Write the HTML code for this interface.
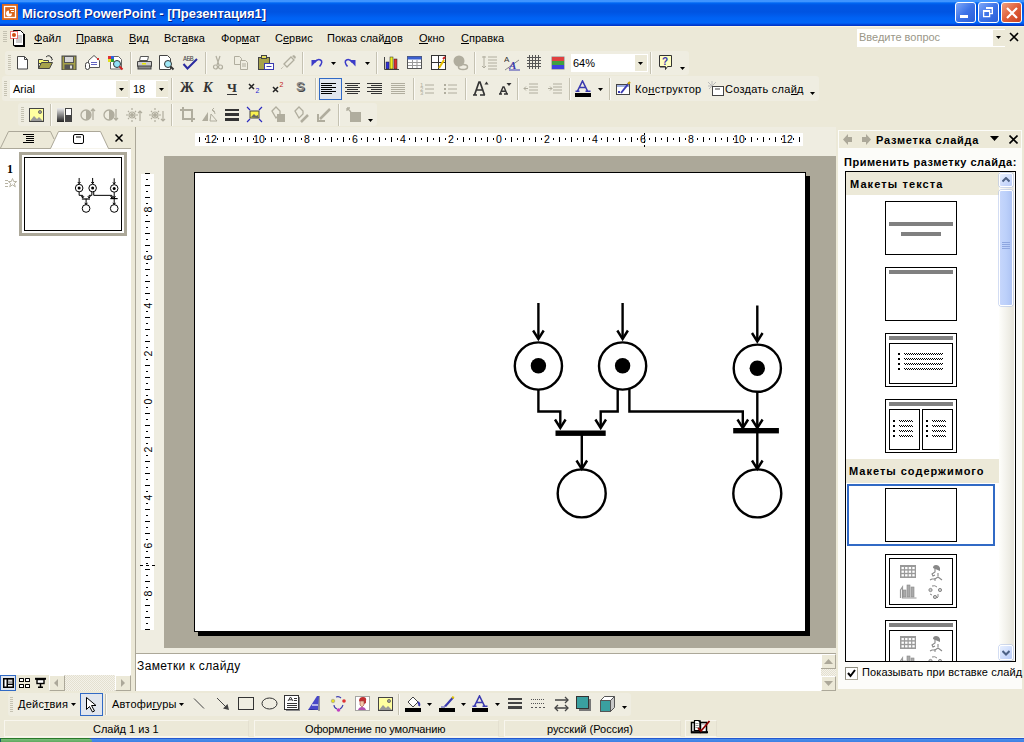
<!DOCTYPE html><html><head><meta charset="utf-8"><style>
*{margin:0;padding:0;box-sizing:border-box}
html,body{width:1024px;height:742px;overflow:hidden;background:#ECE9D8;font-family:"Liberation Sans",sans-serif;font-size:11px;color:#000}
div,svg{position:absolute}
.t{white-space:nowrap;line-height:13px}
u{text-decoration:none;background:linear-gradient(#000,#000) 0 100%/100% 1px no-repeat}
</style></head><body><div style="left:0px;top:0px;width:1024px;height:26px;background:linear-gradient(#3E94FF 0px,#3E94FF 1.5px,#0068F4 3px,#0056E4 5px,#0054E2 12px,#0062F4 18px,#0066F8 23px,#0046DA 24.5px,#0030C0 26px)"></div>
<svg style="left:2px;top:4px" width="17" height="17" viewBox="0 0 17 17"><rect x="0" y="0" width="16" height="16" fill="#D9651E"/><rect x="2.5" y="2.5" width="11" height="11" fill="none" stroke="#fff" stroke-width="1.3"/><path d="M7 6.5A3 3 0 1 0 10 9.5H7z" fill="#fff"/><path d="M8 5.5h4M9 7.5h3" stroke="#fff"/></svg>
<div style="left:955px;top:2px;width:21px;height:21px;background:linear-gradient(135deg,#7FA8F8,#3C73E8 50%,#2A5FD8);border:1px solid #fff;border-radius:3px"></div>
<div style="left:978px;top:2px;width:21px;height:21px;background:linear-gradient(135deg,#7FA8F8,#3C73E8 50%,#2A5FD8);border:1px solid #fff;border-radius:3px"></div>
<div style="left:1001px;top:2px;width:21px;height:21px;background:linear-gradient(135deg,#F0A080,#E0603A 50%,#C84020);border:1px solid #fff;border-radius:3px"></div>
<div style="left:960px;top:15px;width:8px;height:3px;background:#fff"></div>
<svg style="left:978px;top:0px" width="21" height="24" viewBox="0 0 21 24"><rect x="8" y="7" width="7" height="2" fill="#fff"/><rect x="13.6" y="7" width="1.4" height="7" fill="#fff"/><rect x="12" y="13" width="3" height="1.2" fill="#fff"/><rect x="5.6" y="10.6" width="6" height="6" fill="none" stroke="#fff" stroke-width="1.3"/><rect x="5" y="10" width="7" height="2" fill="#fff"/></svg>
<svg style="left:1005px;top:6px" width="14" height="14" viewBox="0 0 14 14"><path d="M2 2l10 10M12 2l-10 10" stroke="#fff" stroke-width="2.2"/></svg>
<div class="t" style="left:22px;top:6px;color:#fff;font-weight:bold;font-size:13px;line-height:15px;text-shadow:1px 1px 0 #0A1E80">Microsoft PowerPoint - [Презентация1]</div>
<div style="left:0px;top:26px;width:1024px;height:24px;background:#ECE9D8"></div>
<div style="left:0px;top:26px;width:1024px;height:1px;background:#FBF6E2"></div>
<div style="left:3px;top:31px;width:4px;height:1px;background:#C5C2B2"></div>
<div style="left:3px;top:33px;width:4px;height:1px;background:#C5C2B2"></div>
<div style="left:3px;top:35px;width:4px;height:1px;background:#C5C2B2"></div>
<div style="left:3px;top:37px;width:4px;height:1px;background:#C5C2B2"></div>
<div style="left:3px;top:39px;width:4px;height:1px;background:#C5C2B2"></div>
<div style="left:3px;top:41px;width:4px;height:1px;background:#C5C2B2"></div>
<svg style="left:9px;top:29px" width="18" height="18" viewBox="0 0 18 18"><path d="M4.5 1.5h7l3 3v12h-10z" fill="#fff" stroke="#000"/><path d="M15 5v12.5H5.5" fill="none" stroke="#000" stroke-width="2"/><path d="M7 7h6M7 9h6M7 11h6M7 13h6" stroke="#999"/><rect x="1.5" y="2.5" width="7" height="7" fill="#fff" stroke="#E00" stroke-dasharray="1 1"/><circle cx="5" cy="6" r="2" fill="#D05010"/></svg>
<div class="t" style="left:34px;top:32px;"><u>Ф</u>айл</div>
<div class="t" style="left:76px;top:32px;"><u>П</u>равка</div>
<div class="t" style="left:129px;top:32px;"><u>В</u>ид</div>
<div class="t" style="left:164px;top:32px;">Вст<u>а</u>вка</div>
<div class="t" style="left:221px;top:32px;">Фор<u>м</u>ат</div>
<div class="t" style="left:275px;top:32px;">С<u>е</u>рвис</div>
<div class="t" style="left:327px;top:32px;">Показ слай<u>д</u>ов</div>
<div class="t" style="left:419px;top:32px;"><u>О</u>кно</div>
<div class="t" style="left:461px;top:32px;"><u>С</u>правка</div>
<div style="left:857px;top:29px;width:148px;height:18px;background:#fff;border:1px solid #fff"></div>
<div class="t" style="left:859px;top:31px;color:#9A9788">Введите вопрос</div>
<div style="left:993px;top:30px;width:12px;height:16px;background:#ECE9D8"></div>
<svg style="left:996px;top:36px" width="6" height="4"><path d="M0 0h5l-2.5 3z" fill="#000"/></svg>
<svg style="left:1009px;top:32px" width="10" height="10" viewBox="0 0 10 10"><path d="M1 1l8 8M9 1l-8 8" stroke="#000" stroke-width="1.6"/></svg>
<div style="left:5px;top:51px;width:684px;height:24px;background:#EFEDE1;border-radius:3px"></div>
<div style="left:2px;top:76px;width:817px;height:25px;background:#EFEDE1;border-radius:3px"></div>
<div style="left:18px;top:103px;width:359px;height:23px;background:#EFEDE1;border-radius:3px"></div>
<div style="left:0px;top:127px;width:131px;height:548px;background:#fff"></div>
<div style="left:0px;top:127px;width:131px;height:22px;background:#ECE9D8"></div>
<div style="left:136px;top:127px;width:700px;height:527px;background:#EFEDE1"></div>
<div style="left:135px;top:127px;width:1px;height:527px;background:#ACA899"></div>
<div style="left:164px;top:156px;width:672px;height:492px;background:#ACA899"></div>
<div style="left:198px;top:176px;width:612px;height:460px;background:#000"></div>
<div style="left:194px;top:172px;width:612px;height:460px;background:#fff;border:1px solid #000"></div>
<div style="left:135px;top:653px;width:701px;height:38px;background:#fff;border-top:1px solid #ACA899;border-left:1px solid #ACA899"></div>
<div style="left:838px;top:130px;width:184px;height:559px;background:#FCFCF9"></div>
<div style="left:839px;top:131px;width:182px;height:17px;background:#ECE9D8"></div>
<div style="left:8px;top:693px;width:623px;height:23px;background:#EFEDE1;border-radius:3px"></div>
<div style="left:4px;top:720px;width:245px;height:17px;border:1px solid #F8F6EE;border-right-color:#E4E0D0;border-bottom-color:#F8F6EE"></div>
<div style="left:254px;top:720px;width:245px;height:17px;border:1px solid #F8F6EE;border-right-color:#E4E0D0;border-bottom-color:#F8F6EE"></div>
<div style="left:504px;top:720px;width:177px;height:17px;border:1px solid #F8F6EE;border-right-color:#E4E0D0;border-bottom-color:#F8F6EE"></div>
<div style="left:685px;top:720px;width:32px;height:17px;border:1px solid #F8F6EE;border-right-color:#E4E0D0;border-bottom-color:#F8F6EE"></div>
<div style="left:0px;top:737px;width:1024px;height:1px;background:#F6F3E6"></div>
<div style="left:0px;top:738px;width:1024px;height:4px;background:linear-gradient(#2458D0 0,#2458D0 1px,#4A8EEA 1px,#3C80E4 4px)"></div>
<div style="left:0px;top:738px;width:92px;height:4px;background:linear-gradient(#2A7A2A 0,#2A7A2A 1px,#7CBE7C 1px,#5EA85E 4px);border-top-right-radius:5px"></div>
<div style="left:0px;top:738px;width:1px;height:4px;background:#1C5F5F"></div>
<div style="left:8px;top:55px;width:3px;height:1px;background:#C5C2B2"></div>
<div style="left:8px;top:57px;width:3px;height:1px;background:#C5C2B2"></div>
<div style="left:8px;top:59px;width:3px;height:1px;background:#C5C2B2"></div>
<div style="left:8px;top:61px;width:3px;height:1px;background:#C5C2B2"></div>
<div style="left:8px;top:63px;width:3px;height:1px;background:#C5C2B2"></div>
<div style="left:8px;top:65px;width:3px;height:1px;background:#C5C2B2"></div>
<div style="left:8px;top:67px;width:3px;height:1px;background:#C5C2B2"></div>
<div style="left:8px;top:69px;width:3px;height:1px;background:#C5C2B2"></div>
<svg style="left:14px;top:54px" width="16" height="16" viewBox="0 0 16 16"><path d="M3.5 2.5h7l3 3v9.5h-10z" fill="#fff" stroke="#444"/><path d="M10.5 2.5v3h3" fill="none" stroke="#444"/></svg>
<svg style="left:37px;top:54px" width="17" height="16" viewBox="0 0 17 16"><path d="M1.5 5.5h4l1 1h5v3h-10z" fill="#F8F870" stroke="#444"/><path d="M1.5 14.5l3-6h11l-3 6z" fill="#A6A24A" stroke="#444"/><path d="M1.5 5.5v9" stroke="#444"/><path d="M9 3q3-3 6 1" fill="none" stroke="#333"/><path d="M13.5 3.5l2 1.5-1 1.5" fill="none" stroke="#333"/></svg>
<svg style="left:61px;top:54px" width="16" height="16" viewBox="0 0 16 16"><rect x="1" y="2" width="14" height="14" fill="#A6A24A" stroke="#444"/><rect x="3.5" y="2.5" width="9" height="6" fill="#D8D8D8" stroke="#555"/><rect x="3.5" y="10.5" width="9" height="5" fill="#555"/><rect x="9" y="11.5" width="2" height="3" fill="#ddd"/></svg>
<svg style="left:84px;top:54px" width="17" height="17" viewBox="0 0 17 17"><path d="M4.5 6.5l5.5-5 5.5 5v7h-11z" fill="#fff" stroke="#555"/><path d="M7 8.5h6M7 10.5h6" stroke="#3A3AB0" stroke-width=".8"/><rect x="13" y="4" width="2" height="2" fill="#D03030"/><rect x="1.5" y="8.5" width="4" height="7" rx="2" fill="#fff" stroke="#444"/></svg>
<svg style="left:107px;top:54px" width="17" height="17" viewBox="0 0 17 17"><path d="M3.5 2.5h8l3 3v9.5h-11z" fill="#fff" stroke="#666"/><rect x="1" y="2" width="3" height="3" fill="#E03030"/><rect x="4" y="2" width="3" height="3" fill="#3060E0"/><rect x="1" y="5" width="3" height="3" fill="#E0E020"/><rect x="4" y="5" width="3" height="3" fill="#30A030"/><circle cx="10" cy="10" r="3.5" fill="#8FE0F8" stroke="#333"/><path d="M12.5 12.5l3 3" stroke="#D02020" stroke-width="2"/></svg>
<div style="left:130px;top:52px;width:1px;height:22px;background:#C5C2B2"></div>
<div style="left:131px;top:52px;width:1px;height:22px;background:#FBFAF5"></div>
<svg style="left:136px;top:54px" width="17" height="17" viewBox="0 0 17 17"><path d="M4.5 2.5h8l-1 4h-8z" fill="#fff" stroke="#555"/><path d="M1.5 7.5h14v5h-14z" fill="#ccc" stroke="#444"/><rect x="2" y="12" width="13" height="3" fill="#888" stroke="#444"/><rect x="6" y="9" width="4" height="1.5" fill="#E8E800"/></svg>
<svg style="left:158px;top:54px" width="17" height="17" viewBox="0 0 17 17"><path d="M1.5 1.5h8l3 3v11h-11z" fill="#fff" stroke="#444"/><circle cx="10" cy="10" r="3.5" fill="#A0E8F8" stroke="#333"/><path d="M12.5 12.5l3 3" stroke="#333" stroke-width="2"/></svg>
<svg style="left:182px;top:54px" width="17" height="17" viewBox="0 0 17 17"><text x="1" y="6.5" font-family="Liberation Mono" font-size="6.5" fill="#444" letter-spacing="-.5">АБВ</text><path d="M1.5 10l4 4.5 9.5-9.5" fill="none" stroke="#2B2BA0" stroke-width="2"/></svg>
<div style="left:205px;top:52px;width:1px;height:22px;background:#C5C2B2"></div>
<div style="left:206px;top:52px;width:1px;height:22px;background:#FBFAF5"></div>
<svg style="left:210px;top:54px" width="16" height="16" viewBox="0 0 16 16"><path d="M6 2l3 9M10 2l-3 9" stroke="#B0AD9E" stroke-width="1.2"/><circle cx="5.5" cy="13" r="2" fill="none" stroke="#B0AD9E" stroke-width="1.2"/><circle cx="10.5" cy="13" r="2" fill="none" stroke="#B0AD9E" stroke-width="1.2"/></svg>
<svg style="left:233px;top:54px" width="17" height="16" viewBox="0 0 17 16"><path d="M1.5 2.5h5l2 2v6h-7z" fill="none" stroke="#B0AD9E"/><path d="M7.5 6.5h5l2 2v7h-7z" fill="#EFEDE1" stroke="#B0AD9E"/><path d="M9 10h4M9 12h4" stroke="#B0AD9E"/></svg>
<svg style="left:257px;top:54px" width="17" height="17" viewBox="0 0 17 17"><rect x="1.5" y="3.5" width="11" height="12" fill="#A6A24A" stroke="#444"/><rect x="4.5" y="1.5" width="5" height="3" fill="#E8E060" stroke="#444"/><rect x="7.5" y="9.5" width="9" height="6" fill="#fff" stroke="#3A3AB0"/><path d="M9.5 12.5h5" stroke="#3A3AB0"/></svg>
<svg style="left:280px;top:54px" width="17" height="16" viewBox="0 0 17 16"><path d="M4 10l7-7 3 3-7 7z" fill="none" stroke="#B0AD9E" stroke-width="1.3"/><path d="M12 2l2-1 2 2-1 2" fill="#B0AD9E"/><path d="M1 15l3-3" stroke="#B0AD9E" stroke-dasharray="1 1"/></svg>
<div style="left:302px;top:52px;width:1px;height:22px;background:#C5C2B2"></div>
<div style="left:303px;top:52px;width:1px;height:22px;background:#FBFAF5"></div>
<svg style="left:310px;top:54px" width="14" height="16" viewBox="0 0 14 16"><path d="M4.5 8.5q3-4 6-2.5t-1 6.5" fill="none" stroke="#3C3CC8" stroke-width="1.5"/><path d="M1.5 12.5v-6.5h6z" fill="#3C3CC8"/></svg>
<svg style="left:331px;top:62px" width="6" height="4" viewBox="0 0 6 4"><path d="M0 0h5l-2.5 3z" fill="#000"/></svg>
<svg style="left:343px;top:54px" width="14" height="16" viewBox="0 0 14 16"><path d="M9.5 8.5q-3-4-6-2.5t1 6.5" fill="none" stroke="#3C3CC8" stroke-width="1.5"/><path d="M12.5 12.5v-6.5h-6z" fill="#3C3CC8"/></svg>
<svg style="left:365px;top:62px" width="6" height="4" viewBox="0 0 6 4"><path d="M0 0h5l-2.5 3z" fill="#000"/></svg>
<div style="left:376px;top:52px;width:1px;height:22px;background:#C5C2B2"></div>
<div style="left:377px;top:52px;width:1px;height:22px;background:#FBFAF5"></div>
<svg style="left:383px;top:54px" width="17" height="17" viewBox="0 0 17 17"><path d="M1.5 3v12.5H16" fill="none" stroke="#444"/><rect x="3" y="8" width="3" height="7" fill="#3030E0" stroke="#222" stroke-width=".5"/><rect x="7" y="3" width="3" height="12" fill="#F0F020" stroke="#222" stroke-width=".5"/><rect x="11" y="5" width="3" height="10" fill="#E03030" stroke="#222" stroke-width=".5"/></svg>
<svg style="left:406px;top:54px" width="17" height="17" viewBox="0 0 17 17"><rect x="1.5" y="2.5" width="14" height="12" fill="#fff" stroke="#555"/><rect x="1.5" y="2.5" width="14" height="3" fill="#3C60D0"/><path d="M2 8.5h13M2 11.5h13M6.5 6v8M11 6v8" stroke="#999"/></svg>
<svg style="left:430px;top:54px" width="17" height="17" viewBox="0 0 17 17"><rect x="1.5" y="1.5" width="14" height="14" fill="#fff" stroke="#333"/><path d="M1.5 8.5h14M8.5 1.5v14" stroke="#333"/><path d="M9 14l5-8" stroke="#E8C000" stroke-width="2"/><path d="M13 5l2-2" stroke="#D02020" stroke-width="2"/></svg>
<svg style="left:452px;top:54px" width="17" height="17" viewBox="0 0 17 17"><circle cx="7" cy="7" r="5.5" fill="#B0AD9E"/><ellipse cx="11" cy="13" rx="4.5" ry="2.5" fill="none" stroke="#B0AD9E" stroke-width="1.5"/></svg>
<div style="left:474px;top:52px;width:1px;height:22px;background:#C5C2B2"></div>
<div style="left:475px;top:52px;width:1px;height:22px;background:#FBFAF5"></div>
<svg style="left:481px;top:54px" width="17" height="16" viewBox="0 0 17 16"><path d="M3 2v12M1 12l2 2 2-2M1 3h4M7 3h9M7 6h9M7 9h9M7 12h9M7 15h9" fill="none" stroke="#B0AD9E"/></svg>
<svg style="left:504px;top:54px" width="17" height="17" viewBox="0 0 17 17"><text x="0" y="8" font-family="Liberation Sans" font-size="8" fill="#333">A</text><path d="M1 16l14-10" stroke="#888"/><text x="5" y="15" font-family="Liberation Serif" font-style="italic" font-weight="bold" font-size="11" fill="#3A3AB0">A</text><path d="M5 16h11" stroke="#3A3AB0"/></svg>
<svg style="left:526px;top:54px" width="16" height="16" viewBox="0 0 16 16"><path d="M1 3.5h14M1 6.5h14M1 9.5h14M1 12.5h14M3.5 1v14M6.5 1v14M9.5 1v14M12.5 1v14" stroke="#555"/></svg>
<svg style="left:550px;top:54px" width="16" height="17" viewBox="0 0 16 17"><rect x="1.5" y="2.5" width="13" height="13" fill="#888"/><rect x="2" y="3" width="12" height="4" fill="#E04040"/><rect x="2" y="7" width="12" height="4" fill="#40A040"/><rect x="2" y="11" width="12" height="4" fill="#4040E0"/></svg>
<div style="left:571px;top:54px;width:77px;height:18px;background:#fff;border:1px solid #fff"></div>
<div class="t" style="left:573px;top:57px;font-size:11px">64%</div>
<div style="left:635px;top:55px;width:12px;height:16px;background:#ECE9D8"></div>
<svg style="left:638px;top:62px" width="6" height="4" viewBox="0 0 6 4"><path d="M0 0h5l-2.5 3z" fill="#000"/></svg>
<div style="left:650px;top:52px;width:1px;height:22px;background:#C5C2B2"></div>
<div style="left:651px;top:52px;width:1px;height:22px;background:#FBFAF5"></div>
<svg style="left:658px;top:54px" width="17" height="17" viewBox="0 0 17 17"><path d="M1.5 1.5h12v11h-4l-2 3v-3h-6z" fill="#FFFFC0" stroke="#333"/><path d="M2 13h5" stroke="#333" stroke-width="1"/><text x="4" y="11" font-family="Liberation Sans" font-weight="bold" font-size="10" fill="#3A3AB0">?</text></svg>
<svg style="left:680px;top:67px" width="6" height="4" viewBox="0 0 6 4"><path d="M0 0h5l-2.5 3z" fill="#000"/></svg>
<div style="left:4px;top:81px;width:3px;height:1px;background:#C5C2B2"></div>
<div style="left:4px;top:83px;width:3px;height:1px;background:#C5C2B2"></div>
<div style="left:4px;top:85px;width:3px;height:1px;background:#C5C2B2"></div>
<div style="left:4px;top:87px;width:3px;height:1px;background:#C5C2B2"></div>
<div style="left:4px;top:89px;width:3px;height:1px;background:#C5C2B2"></div>
<div style="left:4px;top:91px;width:3px;height:1px;background:#C5C2B2"></div>
<div style="left:4px;top:93px;width:3px;height:1px;background:#C5C2B2"></div>
<div style="left:4px;top:95px;width:3px;height:1px;background:#C5C2B2"></div>
<div style="left:10px;top:80px;width:118px;height:18px;background:#fff;border:1px solid #fff"></div>
<div class="t" style="left:13px;top:83px;">Arial</div>
<div style="left:116px;top:81px;width:12px;height:16px;background:#ECE9D8"></div>
<svg style="left:119px;top:88px" width="6" height="4" viewBox="0 0 6 4"><path d="M0 0h5l-2.5 3z" fill="#000"/></svg>
<div style="left:130px;top:80px;width:38px;height:18px;background:#fff;border:1px solid #fff"></div>
<div class="t" style="left:133px;top:83px;">18</div>
<div style="left:156px;top:81px;width:12px;height:16px;background:#ECE9D8"></div>
<svg style="left:159px;top:88px" width="6" height="4" viewBox="0 0 6 4"><path d="M0 0h5l-2.5 3z" fill="#000"/></svg>
<div style="left:171px;top:78px;width:1px;height:22px;background:#C5C2B2"></div>
<div style="left:172px;top:78px;width:1px;height:22px;background:#FBFAF5"></div>
<div class="t" style="left:180px;top:81px;font-family:&quot;Liberation Serif&quot;;font-weight:bold;font-size:14px;color:#333">Ж</div>
<div class="t" style="left:203px;top:81px;font-family:&quot;Liberation Serif&quot;;font-weight:bold;font-style:italic;font-size:14px;color:#333;letter-spacing:0">К</div>
<div class="t" style="left:227px;top:81px;font-family:&quot;Liberation Serif&quot;;font-weight:bold;font-size:13.5px;color:#333">Ч</div>
<div style="left:227px;top:94px;width:10px;height:1px;background:#333"></div>
<svg style="left:248px;top:80px" width="14" height="16" viewBox="0 0 14 16"><path d="M1 4l5 5M6 4l-5 5" stroke="#222" stroke-width="1.5"/><text x="7.5" y="13" font-family="Liberation Sans" font-size="7" fill="#2020D0">2</text></svg>
<svg style="left:272px;top:80px" width="14" height="16" viewBox="0 0 14 16"><path d="M1 7l5 5M6 7l-5 5" stroke="#222" stroke-width="1.5"/><text x="7.5" y="7" font-family="Liberation Sans" font-size="7" fill="#C02020">2</text></svg>
<div class="t" style="left:296px;top:80px;font-weight:bold;font-size:13px;color:#888;text-shadow:1px 1px 0 #444">S</div>
<div style="left:315px;top:78px;width:1px;height:22px;background:#C5C2B2"></div>
<div style="left:316px;top:78px;width:1px;height:22px;background:#FBFAF5"></div>
<div style="left:319px;top:78px;width:23px;height:22px;background:#E1E6EE;border:1px solid #316AC5"></div>
<svg style="left:321px;top:83px" width="16" height="12" viewBox="0 0 16 12"><rect x="0" y="0" width="15" height="1" fill="#000"/><rect x="0" y="2" width="11" height="1" fill="#000"/><rect x="0" y="4" width="15" height="1" fill="#000"/><rect x="0" y="6" width="11" height="1" fill="#000"/><rect x="0" y="8" width="15" height="1" fill="#000"/><rect x="0" y="10" width="11" height="1" fill="#000"/></svg>
<svg style="left:345px;top:83px" width="16" height="12" viewBox="0 0 16 12"><rect x="0" y="0" width="15" height="1" fill="#333"/><rect x="2" y="2" width="11" height="1" fill="#333"/><rect x="0" y="4" width="15" height="1" fill="#333"/><rect x="2" y="6" width="11" height="1" fill="#333"/><rect x="0" y="8" width="15" height="1" fill="#333"/><rect x="2" y="10" width="11" height="1" fill="#333"/></svg>
<svg style="left:367px;top:83px" width="16" height="12" viewBox="0 0 16 12"><rect x="0" y="0" width="15" height="1" fill="#333"/><rect x="4" y="2" width="11" height="1" fill="#333"/><rect x="0" y="4" width="15" height="1" fill="#333"/><rect x="4" y="6" width="11" height="1" fill="#333"/><rect x="0" y="8" width="15" height="1" fill="#333"/><rect x="4" y="10" width="11" height="1" fill="#333"/></svg>
<svg style="left:391px;top:83px" width="16" height="12" viewBox="0 0 16 12"><rect x="0" y="0" width="14" height="1" fill="#B0AD9E"/><rect x="0" y="2" width="14" height="1" fill="#B0AD9E"/><rect x="0" y="4" width="14" height="1" fill="#B0AD9E"/><rect x="0" y="6" width="14" height="1" fill="#B0AD9E"/><rect x="0" y="8" width="14" height="1" fill="#B0AD9E"/><rect x="0" y="10" width="14" height="1" fill="#B0AD9E"/></svg>
<div style="left:413px;top:78px;width:1px;height:22px;background:#C5C2B2"></div>
<div style="left:414px;top:78px;width:1px;height:22px;background:#FBFAF5"></div>
<svg style="left:420px;top:80px" width="16" height="16" viewBox="0 0 16 16"><text x="0" y="7" font-family="Liberation Sans" font-size="6" fill="#B0AD9E">1</text><text x="0" y="11" font-family="Liberation Sans" font-size="6" fill="#B0AD9E">2</text><text x="0" y="15" font-family="Liberation Sans" font-size="6" fill="#B0AD9E">3</text><path d="M5 5h9M5 9h9M5 13h9" stroke="#B0AD9E"/></svg>
<svg style="left:443px;top:80px" width="16" height="16" viewBox="0 0 16 16"><rect x="1" y="4" width="2" height="2" fill="#B0AD9E"/><rect x="1" y="8" width="2" height="2" fill="#B0AD9E"/><rect x="1" y="12" width="2" height="2" fill="#B0AD9E"/><path d="M5 5h9M5 9h9M5 13h9" stroke="#B0AD9E"/></svg>
<div style="left:465px;top:78px;width:1px;height:22px;background:#C5C2B2"></div>
<div style="left:466px;top:78px;width:1px;height:22px;background:#FBFAF5"></div>
<svg style="left:472px;top:80px" width="17" height="17" viewBox="0 0 17 17"><path d="M1 15h4M8 15h5M2.5 15L7 2h1l4.5 13M4.2 10h6" fill="none" stroke="#333" stroke-width="1.7"/><path d="M12.5 4.5l2-3 2 3z" fill="#333"/></svg>
<svg style="left:498px;top:80px" width="14" height="16" viewBox="0 0 14 16"><path d="M1 14h3M6 14h4M2 14l3-7h1l3 7M3.3 11.3h4" fill="none" stroke="#333" stroke-width="1.4"/><path d="M8.5 3h5l-2.5 3z" fill="#333"/></svg>
<div style="left:517px;top:78px;width:1px;height:22px;background:#C5C2B2"></div>
<div style="left:518px;top:78px;width:1px;height:22px;background:#FBFAF5"></div>
<svg style="left:523px;top:80px" width="17" height="16" viewBox="0 0 17 16"><path d="M6 4h9M6 7h9M6 10h9M6 13h9M1 8.5h4M1 8.5l2-2M1 8.5l2 2" fill="none" stroke="#B0AD9E"/></svg>
<svg style="left:547px;top:80px" width="17" height="16" viewBox="0 0 17 16"><path d="M6 4h9M6 7h9M6 10h9M6 13h9M1 8.5h4M5 8.5l-2-2M5 8.5l-2 2" fill="none" stroke="#B0AD9E"/></svg>
<div style="left:569px;top:78px;width:1px;height:22px;background:#C5C2B2"></div>
<div style="left:570px;top:78px;width:1px;height:22px;background:#FBFAF5"></div>
<svg style="left:575px;top:80px" width="17" height="17" viewBox="0 0 17 17"><path d="M2.5 11L7.5 1L12.5 11M4.5 7.5h6M0.5 11.2h4M10.5 11.2h5" fill="none" stroke="#3A3AB0" stroke-width="1.6"/><rect x="0" y="13" width="16" height="4" fill="#000"/></svg>
<svg style="left:598px;top:88px" width="6" height="4" viewBox="0 0 6 4"><path d="M0 0h5l-2.5 3z" fill="#000"/></svg>
<div style="left:609px;top:78px;width:1px;height:22px;background:#C5C2B2"></div>
<div style="left:610px;top:78px;width:1px;height:22px;background:#FBFAF5"></div>
<svg style="left:615px;top:80px" width="17" height="17" viewBox="0 0 17 17"><rect x="1.5" y="4.5" width="13" height="10" fill="#fff" stroke="#444"/><rect x="2" y="5" width="12" height="2" fill="#A0B0E0"/><path d="M6 13l8-10" stroke="#3A3AB0" stroke-width="2"/><path d="M13 4l2-2" stroke="#C8A000" stroke-width="2"/><rect x="3" y="11" width="2" height="2" fill="#3A3AB0"/></svg>
<div class="t" style="left:635px;top:83px;letter-spacing:0.35px">Ко<u>н</u>структор</div>
<svg style="left:707px;top:80px" width="17" height="17" viewBox="0 0 17 17"><path d="M1 2l4 4M5 1v4M1 6h4M2 9l3-3M9 2l-4 4" stroke="#bbb"/><rect x="5.5" y="6.5" width="11" height="9" fill="#fff" stroke="#444"/><path d="M8 9h5" stroke="#444"/></svg>
<div class="t" style="left:725px;top:83px;letter-spacing:0.25px">Создать сла<u>й</u>д</div>
<svg style="left:810px;top:92px" width="6" height="4" viewBox="0 0 6 4"><path d="M0 0h5l-2.5 3z" fill="#000"/></svg>
<div style="left:21px;top:107px;width:3px;height:1px;background:#C5C2B2"></div>
<div style="left:21px;top:109px;width:3px;height:1px;background:#C5C2B2"></div>
<div style="left:21px;top:111px;width:3px;height:1px;background:#C5C2B2"></div>
<div style="left:21px;top:113px;width:3px;height:1px;background:#C5C2B2"></div>
<div style="left:21px;top:115px;width:3px;height:1px;background:#C5C2B2"></div>
<div style="left:21px;top:117px;width:3px;height:1px;background:#C5C2B2"></div>
<div style="left:21px;top:119px;width:3px;height:1px;background:#C5C2B2"></div>
<div style="left:21px;top:121px;width:3px;height:1px;background:#C5C2B2"></div>
<svg style="left:28px;top:106px" width="17" height="17" viewBox="0 0 17 17"><rect x="1" y="2" width="15" height="14" fill="#444"/><rect x="2" y="3" width="13" height="12" fill="#FFFFA0"/><path d="M2 15l4-5 3 3 2-2 4 4z" fill="#999"/><circle cx="12" cy="6" r="1.6" fill="#999" stroke="#444" stroke-width=".6"/></svg>
<div style="left:50px;top:104px;width:1px;height:22px;background:#C5C2B2"></div>
<div style="left:51px;top:104px;width:1px;height:22px;background:#FBFAF5"></div>
<svg style="left:57px;top:106px" width="16" height="17" viewBox="0 0 16 17"><defs><linearGradient id="gg" x1="0" y1="0" x2="0" y2="1"><stop offset="0" stop-color="#eee"/><stop offset="1" stop-color="#222"/></linearGradient></defs><rect x="0" y="2" width="7" height="14" fill="url(#gg)"/><rect x="8.5" y="2.5" width="6" height="13" fill="#fff" stroke="#444"/><rect x="8" y="9" width="7" height="7" fill="#444"/></svg>
<svg style="left:80px;top:106px" width="17" height="17" viewBox="0 0 17 17"><g fill="none" stroke="#B0AD9E" stroke-width="1.3"><circle cx="6" cy="9" r="5"/><path d="M13 3v11M11 5l2-2 2 2"/></g><path d="M6 4a5 5 0 0 1 0 10z" fill="#B0AD9E"/></svg>
<svg style="left:103px;top:106px" width="17" height="17" viewBox="0 0 17 17"><g fill="none" stroke="#B0AD9E" stroke-width="1.3"><circle cx="6" cy="9" r="5"/><path d="M13 3v11M11 12l2 2 2-2"/></g><path d="M6 4a5 5 0 0 1 0 10z" fill="#B0AD9E"/></svg>
<svg style="left:126px;top:106px" width="17" height="17" viewBox="0 0 17 17"><g fill="none" stroke="#B0AD9E" stroke-width="1.2"><circle cx="6" cy="9" r="3"/><path d="M6 2v2M6 14v2M0 9h2M10 9h2M2 5l1 1M10 5l-1 1M2 13l1-1M10 13l-1-1"/><path d="M14 5v10M12 7l2-2 2 2"/></g><circle cx="6" cy="9" r="2" fill="#B0AD9E"/></svg>
<svg style="left:149px;top:106px" width="17" height="17" viewBox="0 0 17 17"><g fill="none" stroke="#B0AD9E" stroke-width="1.2"><circle cx="6" cy="9" r="3"/><path d="M6 2v2M6 14v2M0 9h2M10 9h2M2 5l1 1M10 5l-1 1M2 13l1-1M10 13l-1-1"/><path d="M14 5v10M12 13l2 2 2-2"/></g><circle cx="6" cy="9" r="2" fill="#B0AD9E"/></svg>
<div style="left:171px;top:104px;width:1px;height:22px;background:#C5C2B2"></div>
<div style="left:172px;top:104px;width:1px;height:22px;background:#FBFAF5"></div>
<svg style="left:179px;top:106px" width="17" height="17" viewBox="0 0 17 17"><path d="M4 1v12h12M1 4h12v12" fill="none" stroke="#B0AD9E" stroke-width="2"/></svg>
<svg style="left:201px;top:106px" width="17" height="17" viewBox="0 0 17 17"><path d="M1 15l6-9v9z" fill="#B0AD9E"/><path d="M9 15h7l-6-7z" fill="none" stroke="#B0AD9E"/><path d="M11 4q3 0 3 4M11 4l2-2M11 4l2 2" fill="none" stroke="#B0AD9E"/></svg>
<svg style="left:224px;top:106px" width="16" height="17" viewBox="0 0 16 17"><rect x="1" y="3" width="14" height="2" fill="#333"/><rect x="1" y="7" width="14" height="3" fill="#333"/><rect x="1" y="12" width="14" height="3" fill="#333"/></svg>
<svg style="left:246px;top:106px" width="17" height="17" viewBox="0 0 17 17"><rect x="4" y="5" width="9" height="7" fill="#F8F050" stroke="#444"/><path d="M5 11l3-3 2 2 2-1v3z" fill="#666"/><path d="M1 1l3 3M16 1l-3 3M1 16l3-3M16 16l-3-3" stroke="#2B2BC0" stroke-width="1.2"/></svg>
<svg style="left:270px;top:106px" width="17" height="17" viewBox="0 0 17 17"><path d="M2 5l4-4 4 4v3l-4 4z" fill="none" stroke="#B0AD9E" stroke-width="1.3"/><rect x="7" y="8" width="8" height="8" fill="#B0AD9E"/></svg>
<svg style="left:293px;top:106px" width="17" height="17" viewBox="0 0 17 17"><path d="M2 5l4-4 4 4v3l-4 4z" fill="none" stroke="#B0AD9E" stroke-width="1.3"/><path d="M8 16l7-7" stroke="#B0AD9E" stroke-width="2.5"/></svg>
<svg style="left:316px;top:106px" width="17" height="17" viewBox="0 0 17 17"><path d="M4 13l10-10" stroke="#B0AD9E" stroke-width="2.5"/><path d="M2 8v7h7" fill="none" stroke="#B0AD9E" stroke-width="2"/></svg>
<div style="left:338px;top:104px;width:1px;height:22px;background:#C5C2B2"></div>
<div style="left:339px;top:104px;width:1px;height:22px;background:#FBFAF5"></div>
<svg style="left:345px;top:106px" width="17" height="17" viewBox="0 0 17 17"><rect x="5" y="6" width="11" height="10" fill="#B0AD9E"/><path d="M2 2l4 4M2 2v3M2 2h3" stroke="#B0AD9E" stroke-width="1.3"/></svg>
<svg style="left:368px;top:119px" width="6" height="4" viewBox="0 0 6 4"><path d="M0 0h5l-2.5 3z" fill="#000"/></svg>
<svg style="left:0;top:0" width="1024" height="742" viewBox="0 0 1024 742"><g fill="none" stroke="#000" stroke-width="2.4"><circle cx="538.4" cy="366" r="23.6"/><circle cx="622.6" cy="366" r="23.6"/><circle cx="757.3" cy="368.2" r="23.6"/><circle cx="581.7" cy="493.4" r="24"/><circle cx="757.3" cy="493.4" r="24"/><path d="M538.4 303V338M622.6 303V338M757.3 305.5V340.5"/><path d="M538.4 390V411.5H560.3V427"/><path d="M617.7 389V411.5H600.7V427"/><path d="M629.4 388V411.5H742.8V427"/><path d="M757.3 392V427"/><path d="M581.8 433V468M757.3 431V468"/></g><path d="M533.1 330.5L538.4 339L543.6999999999999 330.5" fill="none" stroke="#000" stroke-width="2.4"/><path d="M617.3000000000001 330.5L622.6 339L627.9 330.5" fill="none" stroke="#000" stroke-width="2.4"/><path d="M752.0 333.0L757.3 341.5L762.5999999999999 333.0" fill="none" stroke="#000" stroke-width="2.4"/><path d="M555.0 419.5L560.3 428L565.5999999999999 419.5" fill="none" stroke="#000" stroke-width="2.4"/><path d="M595.4000000000001 419.5L600.7 428L606.0 419.5" fill="none" stroke="#000" stroke-width="2.4"/><path d="M737.5 419.5L742.8 428L748.0999999999999 419.5" fill="none" stroke="#000" stroke-width="2.4"/><path d="M752.0 419.5L757.3 428L762.5999999999999 419.5" fill="none" stroke="#000" stroke-width="2.4"/><path d="M576.5 460.5L581.8 469L587.0999999999999 460.5" fill="none" stroke="#000" stroke-width="2.4"/><path d="M752.0 460.5L757.3 469L762.5999999999999 460.5" fill="none" stroke="#000" stroke-width="2.4"/><circle cx="538.4" cy="365.8" r="7.7" fill="#000"/><circle cx="622.6" cy="365.8" r="7.7" fill="#000"/><circle cx="757.3" cy="368.2" r="7.7" fill="#000"/><rect x="555.5" y="430.5" width="50.2" height="5.4" fill="#000"/><rect x="733.2" y="428" width="45.7" height="5.4" fill="#000"/></svg>
<div style="left:0px;top:148px;width:51px;height:1px;background:#ACA899"></div>
<div style="left:108px;top:148px;width:23px;height:1px;background:#ACA899"></div>
<svg style="left:0px;top:130px" width="131" height="20" viewBox="0 0 131 20"><path d="M0.5 18L8.5 1.5H50.5L54 9" fill="#ECE9D8" stroke="#ACA899"/><path d="M50.5 18.5L58.5 1.5H100.5L108.5 18.5" fill="#fff" stroke="#ACA899"/></svg>
<svg style="left:23px;top:134px" width="12" height="10" viewBox="0 0 12 10"><path d="M0 .5h11M3 2.5h8M3 4.5h8M3 6.5h8M0 8.5h11" stroke="#000"/></svg>
<svg style="left:73px;top:134px" width="12" height="11" viewBox="0 0 12 11"><rect x=".5" y=".5" width="10" height="9" rx="1.5" fill="#fff" stroke="#000"/><path d="M3 3h5" stroke="#000"/></svg>
<svg style="left:115px;top:134px" width="9" height="8" viewBox="0 0 9 8"><path d="M.5 .5l7 7M7.5 .5l-7 7" stroke="#000" stroke-width="1.5"/></svg>
<div style="left:131px;top:127px;width:4px;height:548px;background:#ECE9D8"></div>
<div style="left:19px;top:152px;width:108px;height:84px;border:3px solid #ACA899;background:#fff"></div>
<div style="left:24px;top:157px;width:98px;height:74px;border:1px solid #000;background:#fff"></div>
<div class="t" style="left:7px;top:163px;font-family:&quot;Liberation Serif&quot;;font-weight:bold;font-size:12px">1</div>
<svg style="left:5px;top:178px" width="12" height="10" viewBox="0 0 12 10"><path d="M0 2.5h3M0 5.5h3M0 8.5h3" stroke="#B8B4A4"/><path d="M7.5 .5l1.2 3h3l-2.4 2 1 3.3-2.8-2-2.8 2 1-3.3-2.4-2h3z" fill="#fff" stroke="#B8B4A4"/></svg>
<svg style="left:0;top:0" width="140" height="240" viewBox="0 0 140 240"><g fill="none" stroke="#000" stroke-width="1"><circle cx="79.15" cy="188.07" r="3.78"/><circle cx="92.63" cy="188.07" r="3.78"/><circle cx="114.20" cy="188.42" r="3.78"/><circle cx="86.08" cy="208.47" r="3.84"/><circle cx="114.20" cy="208.47" r="3.84"/><path d="M79.15 177.98 L79.15 183.58"/><path d="M92.63 177.98 L92.63 183.58"/><path d="M114.20 178.30 L114.20 183.90"/><path d="M79.15 191.91 L79.15 195.35 L82.66 195.35 L82.66 197.83"/><path d="M91.85 191.75 L91.85 195.35 L89.13 195.35 L89.13 197.83"/><path d="M93.72 191.59 L93.72 195.35 L111.88 195.35 L111.88 197.83"/><path d="M114.20 192.23 L114.20 197.83"/><path d="M86.10 198.79 L86.10 204.40"/><path d="M114.20 198.47 L114.20 204.40"/><path d="M77.87 181.98 L79.15 183.74 L80.43 181.98"/><path d="M91.35 181.98 L92.63 183.74 L93.91 181.98"/><path d="M112.92 182.38 L114.20 184.14 L115.48 182.38"/><path d="M81.37 196.23 L82.66 197.99 L83.94 196.23"/><path d="M87.84 196.23 L89.13 197.99 L90.41 196.23"/><path d="M110.60 196.23 L111.88 197.99 L113.16 196.23"/><path d="M112.92 196.23 L114.20 197.99 L115.48 196.23"/><path d="M84.82 202.80 L86.10 204.56 L87.38 202.80"/><path d="M112.92 202.80 L114.20 204.56 L115.48 202.80"/></g><circle cx="79.15" cy="188.07" r="1.5" fill="#000"/><circle cx="92.63" cy="188.07" r="1.5" fill="#000"/><circle cx="114.20" cy="188.42" r="1.5" fill="#000"/><rect x="81.89" y="198.39" width="8.04" height="1.2" fill="#000"/><rect x="110.34" y="197.99" width="7.32" height="1.2" fill="#000"/></svg>
<div style="left:0px;top:675px;width:131px;height:16px;background:#ECE9D8"></div>
<div style="left:0px;top:675px;width:16px;height:16px;background:#E1E6EE;border:1px solid #316AC5"></div>
<svg style="left:0px;top:675px" width="16" height="16" viewBox="0 0 16 16"><rect x="3" y="3" width="11" height="10" fill="#000"/><rect x="4.5" y="4.5" width="2" height="7" fill="#fff"/><rect x="8" y="4.5" width="4.5" height="4.5" fill="#A0A0A0"/><rect x="8.5" y="5" width="3.5" height="1.2" fill="#E0E0E0"/><rect x="8" y="10" width="4.5" height="1.5" fill="#fff"/></svg>
<svg style="left:18px;top:675px" width="14" height="16" viewBox="0 0 14 16"><rect x="1" y="3" width="5" height="4" rx=".6" fill="#000"/><rect x="2" y="4" width="3" height="2" fill="#fff"/><rect x="7" y="3" width="5" height="4" rx=".6" fill="#000"/><rect x="8" y="4" width="3" height="2" fill="#fff"/><rect x="1" y="9" width="5" height="4" rx=".6" fill="#000"/><rect x="2" y="10" width="3" height="2" fill="#fff"/><rect x="7" y="9" width="5" height="4" rx=".6" fill="#000"/><rect x="8" y="10" width="3" height="2" fill="#fff"/></svg>
<svg style="left:34px;top:675px" width="13" height="16" viewBox="0 0 13 16"><path d="M1 3.8h11" stroke="#000" stroke-width="2"/><rect x="3" y="4.5" width="7" height="4" fill="#fff" stroke="#000" stroke-width="1.4"/><path d="M6.5 9v3M4 12.3h5" stroke="#000" stroke-width="1.5"/></svg>
<div style="left:49px;top:675px;width:16px;height:16px;background:#ECE9D8;border:1px solid #fff;border-right-color:#ACA899;border-bottom-color:#ACA899"></div>
<svg style="left:53px;top:679px" width="6" height="8" viewBox="0 0 6 8"><path d="M5 0v8L1 4z" fill="#ACA899"/></svg>
<div style="left:65px;top:675px;width:50px;height:16px;background:repeating-conic-gradient(#F4F2EA 0 25%,#E4E0D0 0 50%) 0 0/2px 2px"></div>
<div style="left:115px;top:675px;width:16px;height:16px;background:#ECE9D8;border:1px solid #fff;border-right-color:#ACA899;border-bottom-color:#ACA899"></div>
<svg style="left:121px;top:679px" width="6" height="8" viewBox="0 0 6 8"><path d="M0 0v8l4-4z" fill="#ACA899"/></svg>
<div style="left:195px;top:133px;width:608px;height:13px;background:#fff"></div>
<svg style="left:0;top:0" width="1024" height="160" viewBox="0 0 1024 160"><rect x="199" y="137" width="1" height="5" fill="#000"/><rect x="205" y="138" width="1" height="2" fill="#000"/><text x="211" y="142.6" text-anchor="middle" font-family="Liberation Sans" font-size="10.5" fill="#000">12</text><rect x="217" y="138" width="1" height="2" fill="#000"/><rect x="223" y="137" width="1" height="5" fill="#000"/><rect x="229" y="138" width="1" height="2" fill="#000"/><rect x="235" y="137" width="1" height="5" fill="#000"/><rect x="241" y="138" width="1" height="2" fill="#000"/><rect x="247" y="137" width="1" height="5" fill="#000"/><rect x="253" y="138" width="1" height="2" fill="#000"/><text x="259" y="142.6" text-anchor="middle" font-family="Liberation Sans" font-size="10.5" fill="#000">10</text><rect x="265" y="138" width="1" height="2" fill="#000"/><rect x="271" y="137" width="1" height="5" fill="#000"/><rect x="277" y="138" width="1" height="2" fill="#000"/><rect x="283" y="137" width="1" height="5" fill="#000"/><rect x="289" y="138" width="1" height="2" fill="#000"/><rect x="295" y="137" width="1" height="5" fill="#000"/><rect x="301" y="138" width="1" height="2" fill="#000"/><text x="307" y="142.6" text-anchor="middle" font-family="Liberation Sans" font-size="10.5" fill="#000">8</text><rect x="313" y="138" width="1" height="2" fill="#000"/><rect x="319" y="137" width="1" height="5" fill="#000"/><rect x="325" y="138" width="1" height="2" fill="#000"/><rect x="331" y="137" width="1" height="5" fill="#000"/><rect x="337" y="138" width="1" height="2" fill="#000"/><rect x="343" y="137" width="1" height="5" fill="#000"/><rect x="349" y="138" width="1" height="2" fill="#000"/><text x="355" y="142.6" text-anchor="middle" font-family="Liberation Sans" font-size="10.5" fill="#000">6</text><rect x="361" y="138" width="1" height="2" fill="#000"/><rect x="367" y="137" width="1" height="5" fill="#000"/><rect x="373" y="138" width="1" height="2" fill="#000"/><rect x="379" y="137" width="1" height="5" fill="#000"/><rect x="385" y="138" width="1" height="2" fill="#000"/><rect x="391" y="137" width="1" height="5" fill="#000"/><rect x="397" y="138" width="1" height="2" fill="#000"/><text x="403" y="142.6" text-anchor="middle" font-family="Liberation Sans" font-size="10.5" fill="#000">4</text><rect x="409" y="138" width="1" height="2" fill="#000"/><rect x="415" y="137" width="1" height="5" fill="#000"/><rect x="421" y="138" width="1" height="2" fill="#000"/><rect x="427" y="137" width="1" height="5" fill="#000"/><rect x="433" y="138" width="1" height="2" fill="#000"/><rect x="439" y="137" width="1" height="5" fill="#000"/><rect x="445" y="138" width="1" height="2" fill="#000"/><text x="451" y="142.6" text-anchor="middle" font-family="Liberation Sans" font-size="10.5" fill="#000">2</text><rect x="457" y="138" width="1" height="2" fill="#000"/><rect x="463" y="137" width="1" height="5" fill="#000"/><rect x="469" y="138" width="1" height="2" fill="#000"/><rect x="475" y="137" width="1" height="5" fill="#000"/><rect x="481" y="138" width="1" height="2" fill="#000"/><rect x="487" y="137" width="1" height="5" fill="#000"/><rect x="493" y="138" width="1" height="2" fill="#000"/><text x="499" y="142.6" text-anchor="middle" font-family="Liberation Sans" font-size="10.5" fill="#000">0</text><rect x="505" y="138" width="1" height="2" fill="#000"/><rect x="511" y="137" width="1" height="5" fill="#000"/><rect x="517" y="138" width="1" height="2" fill="#000"/><rect x="523" y="137" width="1" height="5" fill="#000"/><rect x="529" y="138" width="1" height="2" fill="#000"/><rect x="535" y="137" width="1" height="5" fill="#000"/><rect x="541" y="138" width="1" height="2" fill="#000"/><text x="547" y="142.6" text-anchor="middle" font-family="Liberation Sans" font-size="10.5" fill="#000">2</text><rect x="553" y="138" width="1" height="2" fill="#000"/><rect x="559" y="137" width="1" height="5" fill="#000"/><rect x="565" y="138" width="1" height="2" fill="#000"/><rect x="571" y="137" width="1" height="5" fill="#000"/><rect x="577" y="138" width="1" height="2" fill="#000"/><rect x="583" y="137" width="1" height="5" fill="#000"/><rect x="589" y="138" width="1" height="2" fill="#000"/><text x="595" y="142.6" text-anchor="middle" font-family="Liberation Sans" font-size="10.5" fill="#000">4</text><rect x="601" y="138" width="1" height="2" fill="#000"/><rect x="607" y="137" width="1" height="5" fill="#000"/><rect x="613" y="138" width="1" height="2" fill="#000"/><rect x="619" y="137" width="1" height="5" fill="#000"/><rect x="625" y="138" width="1" height="2" fill="#000"/><rect x="631" y="137" width="1" height="5" fill="#000"/><rect x="637" y="138" width="1" height="2" fill="#000"/><text x="643" y="142.6" text-anchor="middle" font-family="Liberation Sans" font-size="10.5" fill="#000">6</text><rect x="649" y="138" width="1" height="2" fill="#000"/><rect x="655" y="137" width="1" height="5" fill="#000"/><rect x="661" y="138" width="1" height="2" fill="#000"/><rect x="667" y="137" width="1" height="5" fill="#000"/><rect x="673" y="138" width="1" height="2" fill="#000"/><rect x="679" y="137" width="1" height="5" fill="#000"/><rect x="685" y="138" width="1" height="2" fill="#000"/><text x="691" y="142.6" text-anchor="middle" font-family="Liberation Sans" font-size="10.5" fill="#000">8</text><rect x="697" y="138" width="1" height="2" fill="#000"/><rect x="703" y="137" width="1" height="5" fill="#000"/><rect x="709" y="138" width="1" height="2" fill="#000"/><rect x="715" y="137" width="1" height="5" fill="#000"/><rect x="721" y="138" width="1" height="2" fill="#000"/><rect x="727" y="137" width="1" height="5" fill="#000"/><rect x="733" y="138" width="1" height="2" fill="#000"/><text x="739" y="142.6" text-anchor="middle" font-family="Liberation Sans" font-size="10.5" fill="#000">10</text><rect x="745" y="138" width="1" height="2" fill="#000"/><rect x="751" y="137" width="1" height="5" fill="#000"/><rect x="757" y="138" width="1" height="2" fill="#000"/><rect x="763" y="137" width="1" height="5" fill="#000"/><rect x="769" y="138" width="1" height="2" fill="#000"/><rect x="775" y="137" width="1" height="5" fill="#000"/><rect x="781" y="138" width="1" height="2" fill="#000"/><text x="787" y="142.6" text-anchor="middle" font-family="Liberation Sans" font-size="10.5" fill="#000">12</text><rect x="793" y="138" width="1" height="2" fill="#000"/><rect x="799" y="137" width="1" height="5" fill="#000"/></svg>
<div style="left:141px;top:174px;width:13px;height:456px;background:#fff"></div>
<svg style="left:0;top:0" width="200" height="742" viewBox="0 0 200 742"><rect x="145" y="173" width="5" height="1" fill="#000"/><rect x="146" y="179" width="2" height="1" fill="#000"/><rect x="145" y="185" width="5" height="1" fill="#000"/><rect x="146" y="191" width="2" height="1" fill="#000"/><rect x="145" y="197" width="5" height="1" fill="#000"/><rect x="146" y="203" width="2" height="1" fill="#000"/><text x="0" y="0" transform="translate(151.5,209.5) rotate(-90)" text-anchor="middle" font-family="Liberation Sans" font-size="10.5" fill="#000">8</text><rect x="146" y="215" width="2" height="1" fill="#000"/><rect x="145" y="221" width="5" height="1" fill="#000"/><rect x="146" y="227" width="2" height="1" fill="#000"/><rect x="145" y="233" width="5" height="1" fill="#000"/><rect x="146" y="239" width="2" height="1" fill="#000"/><rect x="145" y="245" width="5" height="1" fill="#000"/><rect x="146" y="251" width="2" height="1" fill="#000"/><text x="0" y="0" transform="translate(151.5,257.5) rotate(-90)" text-anchor="middle" font-family="Liberation Sans" font-size="10.5" fill="#000">6</text><rect x="146" y="263" width="2" height="1" fill="#000"/><rect x="145" y="269" width="5" height="1" fill="#000"/><rect x="146" y="275" width="2" height="1" fill="#000"/><rect x="145" y="281" width="5" height="1" fill="#000"/><rect x="146" y="287" width="2" height="1" fill="#000"/><rect x="145" y="293" width="5" height="1" fill="#000"/><rect x="146" y="299" width="2" height="1" fill="#000"/><text x="0" y="0" transform="translate(151.5,305.5) rotate(-90)" text-anchor="middle" font-family="Liberation Sans" font-size="10.5" fill="#000">4</text><rect x="146" y="311" width="2" height="1" fill="#000"/><rect x="145" y="317" width="5" height="1" fill="#000"/><rect x="146" y="323" width="2" height="1" fill="#000"/><rect x="145" y="329" width="5" height="1" fill="#000"/><rect x="146" y="335" width="2" height="1" fill="#000"/><rect x="145" y="341" width="5" height="1" fill="#000"/><rect x="146" y="347" width="2" height="1" fill="#000"/><text x="0" y="0" transform="translate(151.5,353.5) rotate(-90)" text-anchor="middle" font-family="Liberation Sans" font-size="10.5" fill="#000">2</text><rect x="146" y="359" width="2" height="1" fill="#000"/><rect x="145" y="365" width="5" height="1" fill="#000"/><rect x="146" y="371" width="2" height="1" fill="#000"/><rect x="145" y="377" width="5" height="1" fill="#000"/><rect x="146" y="383" width="2" height="1" fill="#000"/><rect x="145" y="389" width="5" height="1" fill="#000"/><rect x="146" y="395" width="2" height="1" fill="#000"/><text x="0" y="0" transform="translate(151.5,401.5) rotate(-90)" text-anchor="middle" font-family="Liberation Sans" font-size="10.5" fill="#000">0</text><rect x="146" y="407" width="2" height="1" fill="#000"/><rect x="145" y="413" width="5" height="1" fill="#000"/><rect x="146" y="419" width="2" height="1" fill="#000"/><rect x="145" y="425" width="5" height="1" fill="#000"/><rect x="146" y="431" width="2" height="1" fill="#000"/><rect x="145" y="437" width="5" height="1" fill="#000"/><rect x="146" y="443" width="2" height="1" fill="#000"/><text x="0" y="0" transform="translate(151.5,449.5) rotate(-90)" text-anchor="middle" font-family="Liberation Sans" font-size="10.5" fill="#000">2</text><rect x="146" y="455" width="2" height="1" fill="#000"/><rect x="145" y="461" width="5" height="1" fill="#000"/><rect x="146" y="467" width="2" height="1" fill="#000"/><rect x="145" y="473" width="5" height="1" fill="#000"/><rect x="146" y="479" width="2" height="1" fill="#000"/><rect x="145" y="485" width="5" height="1" fill="#000"/><rect x="146" y="491" width="2" height="1" fill="#000"/><text x="0" y="0" transform="translate(151.5,497.5) rotate(-90)" text-anchor="middle" font-family="Liberation Sans" font-size="10.5" fill="#000">4</text><rect x="146" y="503" width="2" height="1" fill="#000"/><rect x="145" y="509" width="5" height="1" fill="#000"/><rect x="146" y="515" width="2" height="1" fill="#000"/><rect x="145" y="521" width="5" height="1" fill="#000"/><rect x="146" y="527" width="2" height="1" fill="#000"/><rect x="145" y="533" width="5" height="1" fill="#000"/><rect x="146" y="539" width="2" height="1" fill="#000"/><text x="0" y="0" transform="translate(151.5,545.5) rotate(-90)" text-anchor="middle" font-family="Liberation Sans" font-size="10.5" fill="#000">6</text><rect x="146" y="551" width="2" height="1" fill="#000"/><rect x="145" y="557" width="5" height="1" fill="#000"/><rect x="146" y="563" width="2" height="1" fill="#000"/><rect x="145" y="569" width="5" height="1" fill="#000"/><rect x="146" y="575" width="2" height="1" fill="#000"/><rect x="145" y="581" width="5" height="1" fill="#000"/><rect x="146" y="587" width="2" height="1" fill="#000"/><text x="0" y="0" transform="translate(151.5,593.5) rotate(-90)" text-anchor="middle" font-family="Liberation Sans" font-size="10.5" fill="#000">8</text><rect x="146" y="599" width="2" height="1" fill="#000"/><rect x="145" y="605" width="5" height="1" fill="#000"/><rect x="146" y="611" width="2" height="1" fill="#000"/><rect x="145" y="617" width="5" height="1" fill="#000"/><rect x="146" y="623" width="2" height="1" fill="#000"/><rect x="145" y="629" width="5" height="1" fill="#000"/></svg>
<div style="left:644px;top:133px;width:1px;height:14px;background:repeating-linear-gradient(#000 0 2px,transparent 2px 4px)"></div>
<div style="left:140px;top:565px;width:15px;height:1px;background:repeating-linear-gradient(90deg,#000 0 3px,transparent 3px 6px)"></div>
<div class="t" style="left:137px;top:659px;font-size:12px;line-height:14px;letter-spacing:0.4px">Заметки к слайду</div>
<div style="left:821px;top:654px;width:15px;height:37px;background:repeating-conic-gradient(#F4F2EA 0 25%,#E4E0D0 0 50%) 0 0/2px 2px"></div>
<div style="left:821px;top:654px;width:15px;height:15px;background:#ECE9D8;border:1px solid #fff;border-right-color:#ACA899;border-bottom-color:#ACA899"></div>
<div style="left:821px;top:668px;width:15px;height:1px;background:#ACA899"></div>
<svg style="left:824px;top:659px" width="9" height="5" viewBox="0 0 9 5"><path d="M0 5L4.5 0L9 5z" fill="#ACA899"/></svg>
<div style="left:821px;top:676px;width:15px;height:15px;background:#ECE9D8;border:1px solid #fff;border-right-color:#ACA899;border-bottom-color:#ACA899"></div>
<svg style="left:824px;top:681px" width="9" height="5" viewBox="0 0 9 5"><path d="M0 0L4.5 5L9 0z" fill="#ACA899"/></svg>
<svg style="left:843px;top:134px" width="10" height="11" viewBox="0 0 10 11"><path d="M0 5.5L5 0v3h4v5H5v3z" fill="#ACA899"/></svg>
<svg style="left:861px;top:134px" width="10" height="11" viewBox="0 0 10 11"><path d="M10 5.5L5 0v3H1v5h4v3z" fill="#ACA899"/></svg>
<div class="t" style="left:876px;top:134px;font-weight:bold;letter-spacing:0.75px">Разметка слайда</div>
<svg style="left:990px;top:136px" width="10" height="6" viewBox="0 0 10 6"><path d="M0 0h9L4.5 5z" fill="#000"/></svg>
<svg style="left:1009px;top:135px" width="9" height="9" viewBox="0 0 9 9"><path d="M.5 .5l8 8M8.5 .5l-8 8" stroke="#000" stroke-width="1.6"/></svg>
<div class="t" style="left:844px;top:156px;font-weight:bold;letter-spacing:0.52px">Применить разметку слайда:</div>
<div style="left:845px;top:171px;width:171px;height:491px;background:#fff;border:1px solid #000"></div>
<div style="left:846px;top:172px;width:153px;height:23px;background:#ECE9D8"></div>
<div class="t" style="left:850px;top:178px;font-weight:bold;letter-spacing:1.1px">Макеты текста</div>
<div style="left:846px;top:459px;width:153px;height:24px;background:#ECE9D8"></div>
<div class="t" style="left:849px;top:465px;font-weight:bold;letter-spacing:1px">Макеты содержимого</div>
<div style="left:999px;top:172px;width:15px;height:489px;background:linear-gradient(90deg,#FEFEFB,#F0EFE8 60%,#E6E4DA)"></div>
<div style="left:999px;top:173px;width:14px;height:14px;background:linear-gradient(135deg,#E8F0FF,#B9CCF8);border:1px solid #fff;border-radius:2px;box-shadow:0 0 0 .5px #A8BCE8"></div>
<svg style="left:1002px;top:177px" width="8" height="6" viewBox="0 0 8 6"><path d="M.5 4.5L4 1l3.5 3.5" fill="none" stroke="#4D6185" stroke-width="2"/></svg>
<div style="left:999px;top:190px;width:14px;height:116px;background:linear-gradient(90deg,#C6D6FC,#BCD0FA 50%,#AFC4F4);border:1px solid #fff;border-radius:2px;box-shadow:0 0 0 .5px #A8BCE8"></div>
<svg style="left:1002px;top:242px" width="8" height="8" viewBox="0 0 8 8"><path d="M0 .5h8M0 2.5h8M0 4.5h8M0 6.5h8" stroke="#8EA6E0"/></svg>
<div style="left:999px;top:645px;width:14px;height:15px;background:linear-gradient(135deg,#E8F0FF,#B9CCF8);border:1px solid #fff;border-radius:2px;box-shadow:0 0 0 .5px #A8BCE8"></div>
<svg style="left:1002px;top:650px" width="8" height="6" viewBox="0 0 8 6"><path d="M.5 1L4 4.5l3.5-3.5" fill="none" stroke="#4D6185" stroke-width="2"/></svg>
<div style="left:885px;top:201px;width:72px;height:54px;background:#fff;border:1px solid #000"></div>
<div style="left:889px;top:222px;width:64px;height:4px;background:#808080"></div>
<div style="left:901px;top:232px;width:40px;height:4px;background:#808080"></div>
<div style="left:885px;top:267px;width:72px;height:54px;background:#fff;border:1px solid #000"></div>
<div style="left:889px;top:270px;width:64px;height:4px;background:#808080"></div>
<div style="left:885px;top:333px;width:72px;height:54px;background:#fff;border:1px solid #000"></div>
<div style="left:889px;top:336px;width:64px;height:4px;background:#808080"></div>
<div style="left:889px;top:343px;width:64px;height:41px;border:1px solid #000"></div>
<svg style="left:0;top:0" width="1024" height="742" viewBox="0 0 1024 742"><rect x="898" y="353" width="2" height="2" fill="#000"/><rect x="904" y="353" width="1" height="1" fill="#000"/><rect x="905" y="354" width="1" height="1" fill="#000"/><rect x="906" y="353" width="1" height="1" fill="#000"/><rect x="907" y="354" width="1" height="1" fill="#000"/><rect x="908" y="353" width="1" height="1" fill="#000"/><rect x="909" y="354" width="1" height="1" fill="#000"/><rect x="910" y="353" width="1" height="1" fill="#000"/><rect x="911" y="354" width="1" height="1" fill="#000"/><rect x="912" y="353" width="1" height="1" fill="#000"/><rect x="913" y="354" width="1" height="1" fill="#000"/><rect x="914" y="353" width="1" height="1" fill="#000"/><rect x="915" y="354" width="1" height="1" fill="#000"/><rect x="916" y="353" width="1" height="1" fill="#000"/><rect x="917" y="354" width="1" height="1" fill="#000"/><rect x="918" y="353" width="1" height="1" fill="#000"/><rect x="919" y="354" width="1" height="1" fill="#000"/><rect x="920" y="353" width="1" height="1" fill="#000"/><rect x="921" y="354" width="1" height="1" fill="#000"/><rect x="922" y="353" width="1" height="1" fill="#000"/><rect x="923" y="354" width="1" height="1" fill="#000"/><rect x="924" y="353" width="1" height="1" fill="#000"/><rect x="925" y="354" width="1" height="1" fill="#000"/><rect x="926" y="353" width="1" height="1" fill="#000"/><rect x="927" y="354" width="1" height="1" fill="#000"/><rect x="928" y="353" width="1" height="1" fill="#000"/><rect x="929" y="354" width="1" height="1" fill="#000"/><rect x="930" y="353" width="1" height="1" fill="#000"/><rect x="931" y="354" width="1" height="1" fill="#000"/><rect x="932" y="353" width="1" height="1" fill="#000"/><rect x="933" y="354" width="1" height="1" fill="#000"/><rect x="934" y="353" width="1" height="1" fill="#000"/><rect x="935" y="354" width="1" height="1" fill="#000"/><rect x="936" y="353" width="1" height="1" fill="#000"/><rect x="937" y="354" width="1" height="1" fill="#000"/><rect x="938" y="353" width="1" height="1" fill="#000"/><rect x="939" y="354" width="1" height="1" fill="#000"/><rect x="940" y="353" width="1" height="1" fill="#000"/><rect x="941" y="354" width="1" height="1" fill="#000"/><rect x="942" y="353" width="1" height="1" fill="#000"/><rect x="898" y="358" width="2" height="2" fill="#000"/><rect x="904" y="358" width="1" height="1" fill="#000"/><rect x="905" y="359" width="1" height="1" fill="#000"/><rect x="906" y="358" width="1" height="1" fill="#000"/><rect x="907" y="359" width="1" height="1" fill="#000"/><rect x="908" y="358" width="1" height="1" fill="#000"/><rect x="909" y="359" width="1" height="1" fill="#000"/><rect x="910" y="358" width="1" height="1" fill="#000"/><rect x="911" y="359" width="1" height="1" fill="#000"/><rect x="912" y="358" width="1" height="1" fill="#000"/><rect x="913" y="359" width="1" height="1" fill="#000"/><rect x="914" y="358" width="1" height="1" fill="#000"/><rect x="915" y="359" width="1" height="1" fill="#000"/><rect x="916" y="358" width="1" height="1" fill="#000"/><rect x="917" y="359" width="1" height="1" fill="#000"/><rect x="918" y="358" width="1" height="1" fill="#000"/><rect x="919" y="359" width="1" height="1" fill="#000"/><rect x="920" y="358" width="1" height="1" fill="#000"/><rect x="921" y="359" width="1" height="1" fill="#000"/><rect x="922" y="358" width="1" height="1" fill="#000"/><rect x="923" y="359" width="1" height="1" fill="#000"/><rect x="924" y="358" width="1" height="1" fill="#000"/><rect x="925" y="359" width="1" height="1" fill="#000"/><rect x="926" y="358" width="1" height="1" fill="#000"/><rect x="927" y="359" width="1" height="1" fill="#000"/><rect x="928" y="358" width="1" height="1" fill="#000"/><rect x="929" y="359" width="1" height="1" fill="#000"/><rect x="930" y="358" width="1" height="1" fill="#000"/><rect x="931" y="359" width="1" height="1" fill="#000"/><rect x="932" y="358" width="1" height="1" fill="#000"/><rect x="933" y="359" width="1" height="1" fill="#000"/><rect x="934" y="358" width="1" height="1" fill="#000"/><rect x="935" y="359" width="1" height="1" fill="#000"/><rect x="936" y="358" width="1" height="1" fill="#000"/><rect x="937" y="359" width="1" height="1" fill="#000"/><rect x="938" y="358" width="1" height="1" fill="#000"/><rect x="939" y="359" width="1" height="1" fill="#000"/><rect x="940" y="358" width="1" height="1" fill="#000"/><rect x="941" y="359" width="1" height="1" fill="#000"/><rect x="942" y="358" width="1" height="1" fill="#000"/><rect x="898" y="363" width="2" height="2" fill="#000"/><rect x="904" y="363" width="1" height="1" fill="#000"/><rect x="905" y="364" width="1" height="1" fill="#000"/><rect x="906" y="363" width="1" height="1" fill="#000"/><rect x="907" y="364" width="1" height="1" fill="#000"/><rect x="908" y="363" width="1" height="1" fill="#000"/><rect x="909" y="364" width="1" height="1" fill="#000"/><rect x="910" y="363" width="1" height="1" fill="#000"/><rect x="911" y="364" width="1" height="1" fill="#000"/><rect x="912" y="363" width="1" height="1" fill="#000"/><rect x="913" y="364" width="1" height="1" fill="#000"/><rect x="914" y="363" width="1" height="1" fill="#000"/><rect x="915" y="364" width="1" height="1" fill="#000"/><rect x="916" y="363" width="1" height="1" fill="#000"/><rect x="917" y="364" width="1" height="1" fill="#000"/><rect x="918" y="363" width="1" height="1" fill="#000"/><rect x="919" y="364" width="1" height="1" fill="#000"/><rect x="920" y="363" width="1" height="1" fill="#000"/><rect x="921" y="364" width="1" height="1" fill="#000"/><rect x="922" y="363" width="1" height="1" fill="#000"/><rect x="923" y="364" width="1" height="1" fill="#000"/><rect x="924" y="363" width="1" height="1" fill="#000"/><rect x="925" y="364" width="1" height="1" fill="#000"/><rect x="926" y="363" width="1" height="1" fill="#000"/><rect x="927" y="364" width="1" height="1" fill="#000"/><rect x="928" y="363" width="1" height="1" fill="#000"/><rect x="929" y="364" width="1" height="1" fill="#000"/><rect x="930" y="363" width="1" height="1" fill="#000"/><rect x="931" y="364" width="1" height="1" fill="#000"/><rect x="932" y="363" width="1" height="1" fill="#000"/><rect x="933" y="364" width="1" height="1" fill="#000"/><rect x="934" y="363" width="1" height="1" fill="#000"/><rect x="935" y="364" width="1" height="1" fill="#000"/><rect x="936" y="363" width="1" height="1" fill="#000"/><rect x="937" y="364" width="1" height="1" fill="#000"/><rect x="938" y="363" width="1" height="1" fill="#000"/><rect x="939" y="364" width="1" height="1" fill="#000"/><rect x="940" y="363" width="1" height="1" fill="#000"/><rect x="941" y="364" width="1" height="1" fill="#000"/><rect x="942" y="363" width="1" height="1" fill="#000"/><rect x="898" y="368" width="2" height="2" fill="#000"/><rect x="904" y="368" width="1" height="1" fill="#000"/><rect x="905" y="369" width="1" height="1" fill="#000"/><rect x="906" y="368" width="1" height="1" fill="#000"/><rect x="907" y="369" width="1" height="1" fill="#000"/><rect x="908" y="368" width="1" height="1" fill="#000"/><rect x="909" y="369" width="1" height="1" fill="#000"/><rect x="910" y="368" width="1" height="1" fill="#000"/><rect x="911" y="369" width="1" height="1" fill="#000"/><rect x="912" y="368" width="1" height="1" fill="#000"/><rect x="913" y="369" width="1" height="1" fill="#000"/><rect x="914" y="368" width="1" height="1" fill="#000"/><rect x="915" y="369" width="1" height="1" fill="#000"/><rect x="916" y="368" width="1" height="1" fill="#000"/><rect x="917" y="369" width="1" height="1" fill="#000"/><rect x="918" y="368" width="1" height="1" fill="#000"/><rect x="919" y="369" width="1" height="1" fill="#000"/><rect x="920" y="368" width="1" height="1" fill="#000"/><rect x="921" y="369" width="1" height="1" fill="#000"/><rect x="922" y="368" width="1" height="1" fill="#000"/><rect x="923" y="369" width="1" height="1" fill="#000"/><rect x="924" y="368" width="1" height="1" fill="#000"/><rect x="925" y="369" width="1" height="1" fill="#000"/><rect x="926" y="368" width="1" height="1" fill="#000"/><rect x="927" y="369" width="1" height="1" fill="#000"/><rect x="928" y="368" width="1" height="1" fill="#000"/><rect x="929" y="369" width="1" height="1" fill="#000"/><rect x="930" y="368" width="1" height="1" fill="#000"/><rect x="931" y="369" width="1" height="1" fill="#000"/><rect x="932" y="368" width="1" height="1" fill="#000"/><rect x="933" y="369" width="1" height="1" fill="#000"/><rect x="934" y="368" width="1" height="1" fill="#000"/><rect x="935" y="369" width="1" height="1" fill="#000"/><rect x="936" y="368" width="1" height="1" fill="#000"/><rect x="937" y="369" width="1" height="1" fill="#000"/><rect x="938" y="368" width="1" height="1" fill="#000"/><rect x="939" y="369" width="1" height="1" fill="#000"/><rect x="940" y="368" width="1" height="1" fill="#000"/><rect x="941" y="369" width="1" height="1" fill="#000"/><rect x="942" y="368" width="1" height="1" fill="#000"/></svg>
<div style="left:885px;top:399px;width:72px;height:54px;background:#fff;border:1px solid #000"></div>
<div style="left:889px;top:402px;width:64px;height:4px;background:#808080"></div>
<div style="left:889px;top:409px;width:31px;height:41px;border:1px solid #000"></div>
<div style="left:922px;top:409px;width:31px;height:41px;border:1px solid #000"></div>
<svg style="left:0;top:0" width="1024" height="742" viewBox="0 0 1024 742"><rect x="893" y="420" width="2" height="2" fill="#000"/><rect x="899" y="420" width="1" height="1" fill="#000"/><rect x="900" y="421" width="1" height="1" fill="#000"/><rect x="901" y="420" width="1" height="1" fill="#000"/><rect x="902" y="421" width="1" height="1" fill="#000"/><rect x="903" y="420" width="1" height="1" fill="#000"/><rect x="904" y="421" width="1" height="1" fill="#000"/><rect x="905" y="420" width="1" height="1" fill="#000"/><rect x="906" y="421" width="1" height="1" fill="#000"/><rect x="907" y="420" width="1" height="1" fill="#000"/><rect x="908" y="421" width="1" height="1" fill="#000"/><rect x="909" y="420" width="1" height="1" fill="#000"/><rect x="910" y="421" width="1" height="1" fill="#000"/><rect x="911" y="420" width="1" height="1" fill="#000"/><rect x="912" y="421" width="1" height="1" fill="#000"/><rect x="926" y="420" width="2" height="2" fill="#000"/><rect x="932" y="420" width="1" height="1" fill="#000"/><rect x="933" y="421" width="1" height="1" fill="#000"/><rect x="934" y="420" width="1" height="1" fill="#000"/><rect x="935" y="421" width="1" height="1" fill="#000"/><rect x="936" y="420" width="1" height="1" fill="#000"/><rect x="937" y="421" width="1" height="1" fill="#000"/><rect x="938" y="420" width="1" height="1" fill="#000"/><rect x="939" y="421" width="1" height="1" fill="#000"/><rect x="940" y="420" width="1" height="1" fill="#000"/><rect x="941" y="421" width="1" height="1" fill="#000"/><rect x="942" y="420" width="1" height="1" fill="#000"/><rect x="943" y="421" width="1" height="1" fill="#000"/><rect x="944" y="420" width="1" height="1" fill="#000"/><rect x="945" y="421" width="1" height="1" fill="#000"/><rect x="893" y="425" width="2" height="2" fill="#000"/><rect x="899" y="425" width="1" height="1" fill="#000"/><rect x="900" y="426" width="1" height="1" fill="#000"/><rect x="901" y="425" width="1" height="1" fill="#000"/><rect x="902" y="426" width="1" height="1" fill="#000"/><rect x="903" y="425" width="1" height="1" fill="#000"/><rect x="904" y="426" width="1" height="1" fill="#000"/><rect x="905" y="425" width="1" height="1" fill="#000"/><rect x="906" y="426" width="1" height="1" fill="#000"/><rect x="907" y="425" width="1" height="1" fill="#000"/><rect x="908" y="426" width="1" height="1" fill="#000"/><rect x="909" y="425" width="1" height="1" fill="#000"/><rect x="910" y="426" width="1" height="1" fill="#000"/><rect x="911" y="425" width="1" height="1" fill="#000"/><rect x="912" y="426" width="1" height="1" fill="#000"/><rect x="926" y="425" width="2" height="2" fill="#000"/><rect x="932" y="425" width="1" height="1" fill="#000"/><rect x="933" y="426" width="1" height="1" fill="#000"/><rect x="934" y="425" width="1" height="1" fill="#000"/><rect x="935" y="426" width="1" height="1" fill="#000"/><rect x="936" y="425" width="1" height="1" fill="#000"/><rect x="937" y="426" width="1" height="1" fill="#000"/><rect x="938" y="425" width="1" height="1" fill="#000"/><rect x="939" y="426" width="1" height="1" fill="#000"/><rect x="940" y="425" width="1" height="1" fill="#000"/><rect x="941" y="426" width="1" height="1" fill="#000"/><rect x="942" y="425" width="1" height="1" fill="#000"/><rect x="943" y="426" width="1" height="1" fill="#000"/><rect x="944" y="425" width="1" height="1" fill="#000"/><rect x="945" y="426" width="1" height="1" fill="#000"/><rect x="893" y="430" width="2" height="2" fill="#000"/><rect x="899" y="430" width="1" height="1" fill="#000"/><rect x="900" y="431" width="1" height="1" fill="#000"/><rect x="901" y="430" width="1" height="1" fill="#000"/><rect x="902" y="431" width="1" height="1" fill="#000"/><rect x="903" y="430" width="1" height="1" fill="#000"/><rect x="904" y="431" width="1" height="1" fill="#000"/><rect x="905" y="430" width="1" height="1" fill="#000"/><rect x="906" y="431" width="1" height="1" fill="#000"/><rect x="907" y="430" width="1" height="1" fill="#000"/><rect x="908" y="431" width="1" height="1" fill="#000"/><rect x="909" y="430" width="1" height="1" fill="#000"/><rect x="910" y="431" width="1" height="1" fill="#000"/><rect x="911" y="430" width="1" height="1" fill="#000"/><rect x="912" y="431" width="1" height="1" fill="#000"/><rect x="926" y="430" width="2" height="2" fill="#000"/><rect x="932" y="430" width="1" height="1" fill="#000"/><rect x="933" y="431" width="1" height="1" fill="#000"/><rect x="934" y="430" width="1" height="1" fill="#000"/><rect x="935" y="431" width="1" height="1" fill="#000"/><rect x="936" y="430" width="1" height="1" fill="#000"/><rect x="937" y="431" width="1" height="1" fill="#000"/><rect x="938" y="430" width="1" height="1" fill="#000"/><rect x="939" y="431" width="1" height="1" fill="#000"/><rect x="940" y="430" width="1" height="1" fill="#000"/><rect x="941" y="431" width="1" height="1" fill="#000"/><rect x="942" y="430" width="1" height="1" fill="#000"/><rect x="943" y="431" width="1" height="1" fill="#000"/><rect x="944" y="430" width="1" height="1" fill="#000"/><rect x="945" y="431" width="1" height="1" fill="#000"/><rect x="893" y="435" width="2" height="2" fill="#000"/><rect x="899" y="435" width="1" height="1" fill="#000"/><rect x="900" y="436" width="1" height="1" fill="#000"/><rect x="901" y="435" width="1" height="1" fill="#000"/><rect x="902" y="436" width="1" height="1" fill="#000"/><rect x="903" y="435" width="1" height="1" fill="#000"/><rect x="904" y="436" width="1" height="1" fill="#000"/><rect x="905" y="435" width="1" height="1" fill="#000"/><rect x="906" y="436" width="1" height="1" fill="#000"/><rect x="907" y="435" width="1" height="1" fill="#000"/><rect x="908" y="436" width="1" height="1" fill="#000"/><rect x="909" y="435" width="1" height="1" fill="#000"/><rect x="910" y="436" width="1" height="1" fill="#000"/><rect x="911" y="435" width="1" height="1" fill="#000"/><rect x="912" y="436" width="1" height="1" fill="#000"/><rect x="926" y="435" width="2" height="2" fill="#000"/><rect x="932" y="435" width="1" height="1" fill="#000"/><rect x="933" y="436" width="1" height="1" fill="#000"/><rect x="934" y="435" width="1" height="1" fill="#000"/><rect x="935" y="436" width="1" height="1" fill="#000"/><rect x="936" y="435" width="1" height="1" fill="#000"/><rect x="937" y="436" width="1" height="1" fill="#000"/><rect x="938" y="435" width="1" height="1" fill="#000"/><rect x="939" y="436" width="1" height="1" fill="#000"/><rect x="940" y="435" width="1" height="1" fill="#000"/><rect x="941" y="436" width="1" height="1" fill="#000"/><rect x="942" y="435" width="1" height="1" fill="#000"/><rect x="943" y="436" width="1" height="1" fill="#000"/><rect x="944" y="435" width="1" height="1" fill="#000"/><rect x="945" y="436" width="1" height="1" fill="#000"/></svg>
<div style="left:847px;top:484px;width:148px;height:62px;border:2px solid #316AC5"></div>
<div style="left:885px;top:488px;width:72px;height:54px;background:#fff;border:1px solid #000"></div>
<div style="left:885px;top:554px;width:72px;height:54px;background:#fff;border:1px solid #000"></div>
<div style="left:889px;top:558px;width:64px;height:47px;border:1px solid #000"></div>
<svg style="left:0;top:0" width="1024" height="742" viewBox="0 0 1024 742"><rect x="900" y="565" width="16" height="13" fill="#999"/><rect x="901.5" y="567.0" width="2.4" height="2.2" fill="#fff"/><rect x="905.1" y="567.0" width="2.4" height="2.2" fill="#fff"/><rect x="908.7" y="567.0" width="2.4" height="2.2" fill="#fff"/><rect x="912.3" y="567.0" width="2.4" height="2.2" fill="#fff"/><rect x="901.5" y="570.6" width="2.4" height="2.2" fill="#fff"/><rect x="905.1" y="570.6" width="2.4" height="2.2" fill="#fff"/><rect x="908.7" y="570.6" width="2.4" height="2.2" fill="#fff"/><rect x="912.3" y="570.6" width="2.4" height="2.2" fill="#fff"/><rect x="901.5" y="574.2" width="2.4" height="2.2" fill="#fff"/><rect x="905.1" y="574.2" width="2.4" height="2.2" fill="#fff"/><rect x="908.7" y="574.2" width="2.4" height="2.2" fill="#fff"/><rect x="912.3" y="574.2" width="2.4" height="2.2" fill="#fff"/><path d="M933 568q0-3 3-3t4 3v3" fill="#888"/><path d="M935 568v4l-3 2 1 2 2-1" fill="none" stroke="#888" stroke-width="1.1"/><path d="M938 573v3M930 580l2-1h3l3-2 4 3" fill="none" stroke="#888" stroke-width="1.1"/><path d="M935 578v3" stroke="#888"/><path d="M900.5 598v-8l2-3v11h14" fill="none" stroke="#999" stroke-width="1.2"/><rect x="903" y="590" width="3" height="7" fill="#AAA" stroke="#888" stroke-width=".6"/><rect x="907" y="585" width="3" height="12" fill="#AAA" stroke="#888" stroke-width=".6"/><rect x="911" y="587" width="3" height="10" fill="#AAA" stroke="#888" stroke-width=".6"/><circle cx="930.5" cy="590" r="1.6" fill="#ccc" stroke="#888"/><circle cx="940" cy="590" r="1.6" fill="#ccc" stroke="#888"/><circle cx="935" cy="597" r="1.6" fill="#ccc" stroke="#888"/><path d="M932 586q3-1 5 1M938 594v3l-1 1M930 594l2 1" fill="none" stroke="#888"/></svg>
<div style="left:885px;top:620px;width:72px;height:41px;background:#fff;border:1px solid #000;border-bottom:none"></div>
<div style="left:889px;top:623px;width:64px;height:4px;background:#808080"></div>
<div style="left:889px;top:630px;width:64px;height:31px;border:1px solid #000;border-bottom:none"></div>
<svg style="left:0;top:0" width="1024" height="661" viewBox="0 0 1024 661"><rect x="900" y="636" width="16" height="13" fill="#999"/><rect x="901.5" y="638.0" width="2.4" height="2.2" fill="#fff"/><rect x="905.1" y="638.0" width="2.4" height="2.2" fill="#fff"/><rect x="908.7" y="638.0" width="2.4" height="2.2" fill="#fff"/><rect x="912.3" y="638.0" width="2.4" height="2.2" fill="#fff"/><rect x="901.5" y="641.6" width="2.4" height="2.2" fill="#fff"/><rect x="905.1" y="641.6" width="2.4" height="2.2" fill="#fff"/><rect x="908.7" y="641.6" width="2.4" height="2.2" fill="#fff"/><rect x="912.3" y="641.6" width="2.4" height="2.2" fill="#fff"/><rect x="901.5" y="645.2" width="2.4" height="2.2" fill="#fff"/><rect x="905.1" y="645.2" width="2.4" height="2.2" fill="#fff"/><rect x="908.7" y="645.2" width="2.4" height="2.2" fill="#fff"/><rect x="912.3" y="645.2" width="2.4" height="2.2" fill="#fff"/><path d="M933 639q0-3 3-3t4 3v3" fill="#888"/><path d="M935 639v4l-3 2 1 2 2-1" fill="none" stroke="#888" stroke-width="1.1"/><path d="M938 644v3M930 651l2-1h3l3-2 4 3" fill="none" stroke="#888" stroke-width="1.1"/><path d="M935 649v3" stroke="#888"/><path d="M900.5 669v-8l2-3v11h14" fill="none" stroke="#999" stroke-width="1.2"/><rect x="903" y="661" width="3" height="7" fill="#AAA" stroke="#888" stroke-width=".6"/><rect x="907" y="656" width="3" height="12" fill="#AAA" stroke="#888" stroke-width=".6"/><rect x="911" y="658" width="3" height="10" fill="#AAA" stroke="#888" stroke-width=".6"/><circle cx="930.5" cy="661" r="1.6" fill="#ccc" stroke="#888"/><circle cx="940" cy="661" r="1.6" fill="#ccc" stroke="#888"/><circle cx="935" cy="668" r="1.6" fill="#ccc" stroke="#888"/><path d="M932 657q3-1 5 1M938 665v3l-1 1M930 665l2 1" fill="none" stroke="#888"/></svg>
<div style="left:845px;top:661px;width:171px;height:1px;background:#000"></div>
<div style="left:845px;top:667px;width:13px;height:13px;background:#fff;border:1px solid #ACA899;border-top-color:#8C8B7E;border-left-color:#8C8B7E"></div>
<svg style="left:847px;top:669px" width="9" height="9" viewBox="0 0 9 9"><path d="M1 4l2.5 3L8 1" fill="none" stroke="#000" stroke-width="2"/></svg>
<div class="t" style="left:862px;top:666px;letter-spacing:0.1px">Показывать при вставке слайд</div>
<div style="left:10px;top:697px;width:3px;height:1px;background:#C5C2B2"></div>
<div style="left:10px;top:699px;width:3px;height:1px;background:#C5C2B2"></div>
<div style="left:10px;top:701px;width:3px;height:1px;background:#C5C2B2"></div>
<div style="left:10px;top:703px;width:3px;height:1px;background:#C5C2B2"></div>
<div style="left:10px;top:705px;width:3px;height:1px;background:#C5C2B2"></div>
<div style="left:10px;top:707px;width:3px;height:1px;background:#C5C2B2"></div>
<div style="left:10px;top:709px;width:3px;height:1px;background:#C5C2B2"></div>
<div style="left:10px;top:711px;width:3px;height:1px;background:#C5C2B2"></div>
<div class="t" style="left:18px;top:698px;letter-spacing:0.25px">Дейс<u>т</u>вия</div>
<svg style="left:71px;top:703px" width="6" height="4" viewBox="0 0 6 4"><path d="M0 0h5l-2.5 3z" fill="#000"/></svg>
<div style="left:80px;top:693px;width:23px;height:23px;background:#E1E6EE;border:1px solid #316AC5"></div>
<svg style="left:85px;top:696px" width="12" height="17" viewBox="0 0 12 17"><path d="M1.5 1.5v12l3-3 3 5.5 2-1-3-5.5h4.5z" fill="#fff" stroke="#000"/></svg>
<div style="left:105px;top:694px;width:1px;height:21px;background:#C5C2B2"></div>
<div style="left:106px;top:694px;width:1px;height:21px;background:#FBFAF5"></div>
<div class="t" style="left:112px;top:698px;letter-spacing:0.2px">Автофи<u>г</u>уры</div>
<svg style="left:179px;top:703px" width="6" height="4" viewBox="0 0 6 4"><path d="M0 0h5l-2.5 3z" fill="#000"/></svg>
<svg style="left:191px;top:695px" width="17" height="17" viewBox="0 0 17 17"><path d="M3 3.5l10 10" stroke="#444" stroke-width="1"/></svg>
<svg style="left:215px;top:695px" width="17" height="17" viewBox="0 0 17 17"><path d="M2 3l9 9" stroke="#444" stroke-width="1"/><path d="M14 15l-6-1.5 4.5-4.5z" fill="#444"/></svg>
<svg style="left:237px;top:695px" width="17" height="17" viewBox="0 0 17 17"><rect x="1.5" y="2.5" width="15" height="12" fill="none" stroke="#333"/></svg>
<svg style="left:261px;top:695px" width="17" height="17" viewBox="0 0 17 17"><ellipse cx="8.5" cy="8.5" rx="7.5" ry="5.5" fill="none" stroke="#333"/></svg>
<svg style="left:284px;top:695px" width="17" height="17" viewBox="0 0 17 17"><rect x="2" y="2" width="14" height="14" fill="#888"/><rect x="0.5" y="0.5" width="14" height="14" fill="#fff" stroke="#333"/><path d="M4 6l2.5-4 2.5 4M5 4.8h3" fill="none" stroke="#333"/><path d="M10 3.5h3M10 5.5h3M3 8.5h10M3 10.5h10M3 12.5h10" stroke="#333"/></svg>
<svg style="left:307px;top:695px" width="17" height="17" viewBox="0 0 17 17"><path d="M11 1h2v15h-2z" fill="#999"/><path d="M1 15L10 1h2l-1 14z" fill="#4848C8"/><path d="M1 15l3-1 7 1z" fill="#2A2A90"/><path d="M5 10h6" stroke="#fff" stroke-width="1.2"/></svg>
<svg style="left:330px;top:695px" width="17" height="17" viewBox="0 0 17 17"><circle cx="3" cy="6" r="1.8" fill="#E8E020" stroke="#888" stroke-width=".5"/><circle cx="14" cy="6" r="1.8" fill="#E03030"/><circle cx="8.5" cy="15" r="1.8" fill="#C040C0"/><path d="M6 2q3-1 5 1M13 10q-1 3-3 4M4 10q0 3 3 4" fill="none" stroke="#3A3AB0" stroke-width="1.1"/></svg>
<svg style="left:354px;top:695px" width="17" height="17" viewBox="0 0 17 17"><rect x="1.5" y="1.5" width="14" height="14" fill="#fff" stroke="#555" stroke-dasharray="1 1"/><path d="M5 6q0-4 4-4t3 4v2l-2 1z" fill="#C03030"/><path d="M6 6h4v4l-2 2-2-2z" fill="#F0C8A8" stroke="#A04040" stroke-width=".6"/><path d="M4 15q1-3 4-3t4 3z" fill="#B050B0"/></svg>
<svg style="left:377px;top:695px" width="17" height="17" viewBox="0 0 17 17"><rect x="1" y="2" width="15" height="14" fill="#444"/><rect x="2" y="3" width="13" height="12" fill="#FFFFA0"/><path d="M2 15l4-5 3 3 2-2 4 4z" fill="#999"/><circle cx="12" cy="6" r="1.6" fill="#999" stroke="#444" stroke-width=".6"/></svg>
<div style="left:398px;top:694px;width:1px;height:21px;background:#C5C2B2"></div>
<div style="left:399px;top:694px;width:1px;height:21px;background:#FBFAF5"></div>
<svg style="left:405px;top:695px" width="17" height="17" viewBox="0 0 17 17"><path d="M3 7l5-5 5 5-5 5z" fill="#fff" stroke="#444"/><path d="M13 7q2 2 1 4" fill="none" stroke="#3A3AB0" stroke-width="2"/><rect x="0" y="13" width="16" height="4" fill="#000"/></svg>
<svg style="left:427px;top:703px" width="6" height="4" viewBox="0 0 6 4"><path d="M0 0h5l-2.5 3z" fill="#000"/></svg>
<svg style="left:439px;top:695px" width="17" height="17" viewBox="0 0 17 17"><path d="M5 11l8-9 2 1-8 9z" fill="#3A3AB0"/><path d="M13 2l2 1" stroke="#E0C000" stroke-width="2"/><path d="M2 12h4" stroke="#3A3AB0"/><rect x="0" y="13" width="16" height="4" fill="#000"/></svg>
<svg style="left:461px;top:703px" width="6" height="4" viewBox="0 0 6 4"><path d="M0 0h5l-2.5 3z" fill="#000"/></svg>
<svg style="left:472px;top:695px" width="17" height="17" viewBox="0 0 17 17"><path d="M2.5 11L7.5 1L12.5 11M4.5 7.5h6M0.5 11.2h4M10.5 11.2h5" fill="none" stroke="#3A3AB0" stroke-width="1.6"/><rect x="0" y="13" width="16" height="4" fill="#000"/></svg>
<svg style="left:495px;top:703px" width="6" height="4" viewBox="0 0 6 4"><path d="M0 0h5l-2.5 3z" fill="#000"/></svg>
<svg style="left:507px;top:695px" width="16" height="17" viewBox="0 0 16 17"><rect x="1" y="3" width="14" height="2" fill="#444"/><rect x="1" y="7" width="14" height="2" fill="#444"/><rect x="1" y="11" width="14" height="3" fill="#444"/></svg>
<svg style="left:530px;top:695px" width="16" height="17" viewBox="0 0 16 17"><path d="M1 4.5h14M1 8.5h14" stroke="#555" stroke-dasharray="1 1"/><path d="M1 12.5h14" stroke="#555" stroke-dasharray="2 2"/></svg>
<svg style="left:553px;top:695px" width="17" height="17" viewBox="0 0 17 17"><path d="M2 5h13M2 13h13" stroke="#444" stroke-width="1.3"/><path d="M12 2l3 3-3 3M5 10l-3 3 3 3M12 10l3 3-3 3" fill="none" stroke="#444" stroke-width="1.3"/></svg>
<svg style="left:576px;top:695px" width="16" height="17" viewBox="0 0 16 17"><rect x="3" y="4" width="12" height="12" fill="#777"/><rect x="0.5" y="1.5" width="12" height="12" fill="#3AA0A0" stroke="#333"/></svg>
<svg style="left:599px;top:695px" width="17" height="17" viewBox="0 0 17 17"><path d="M1.5 5.5l4-4h10v11l-4 4h-10z" fill="#C8C8C8" stroke="#555"/><path d="M1.5 5.5l4-4h10l-4 4z" fill="#fff" stroke="#555"/><rect x="1.5" y="5.5" width="10" height="11" fill="#3AA0A0" stroke="#555"/></svg>
<svg style="left:622px;top:706px" width="6" height="4" viewBox="0 0 6 4"><path d="M0 0h5l-2.5 3z" fill="#000"/></svg>
<div class="t" style="left:93px;top:723px;">Слайд 1 из 1</div>
<div class="t" style="left:305px;top:723px;letter-spacing:-0.15px">Оформление по умолчанию</div>
<div class="t" style="left:547px;top:723px;">русский (Россия)</div>
<svg style="left:690px;top:719px" width="21" height="16" viewBox="0 0 21 16"><path d="M1.5 3.5h3v8h4.5V2h1v11.5h-8.5z" fill="#fff" stroke="#000" stroke-width="1.5"/><path d="M4.5 1.5h4l1.5 1.5v8.5H4.5z" fill="#fff" stroke="#000" stroke-width="1.2"/><path d="M10.5 3.5h6v10h-6z" fill="#fff" stroke="#000" stroke-width="1.5"/><path d="M1 13.2h17" stroke="#000" stroke-width="2"/><path d="M5.5 4.5h3M5.5 6.5h3M5.5 8.5h3M12 5h3" stroke="#999"/><path d="M8 9l3 3 8.5-10" fill="none" stroke="#8B0000" stroke-width="1.8"/></svg></body></html>
